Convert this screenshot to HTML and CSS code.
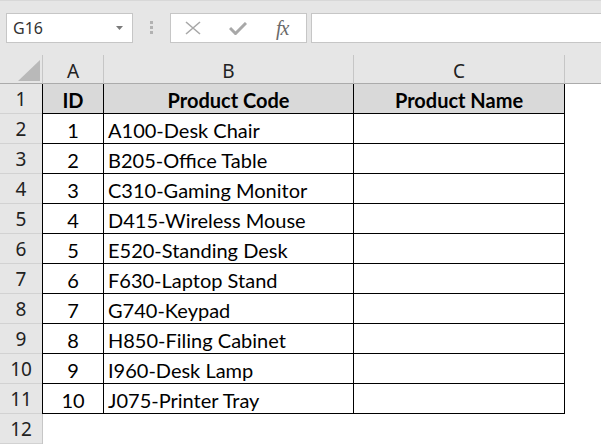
FILE: index.html
```html
<!DOCTYPE html>
<html lang="en">
<head>
  <meta charset="UTF-8" />
  <meta name="viewport" content="width=device-width, initial-scale=1" />
  <title>Product Codes</title>
  <link rel="stylesheet" href="styles.css">
</head>
<body>
  <div class="formula-bar">
    <div class="name-box">
      <span>G16</span>
      <svg class="caret" width="7" height="4" viewBox="0 0 7 4"><polygon points="0,0 7,0 3.5,4" /></svg>
    </div>
    <div class="grip"><i></i><i></i><i></i></div>
    <div class="fx-buttons">
      <svg class="icon-cancel" width="16" height="14" viewBox="0 0 16 14">
        <path d="M1 1 L15 13 M15 1 L1 13" />
      </svg>
      <svg class="icon-enter" width="18" height="13" viewBox="0 0 18 13">
        <path d="M1 6 L6.5 11.5 L17 1" />
      </svg>
      <span class="fx">fx</span>
    </div>
    <div class="formula-input"></div>
  </div>

  <div class="sheet">
    <div class="corner">
      <svg width="22" height="21" viewBox="0 0 22 21"><polygon points="22,0 22,21 0,21" /></svg>
    </div>
    <div class="col-head first">A</div>
    <div class="col-head">B</div>
    <div class="col-head">C</div>
    <div class="col-head last"></div>

    <div class="row-head">1</div>
    <div class="cell first hdr">ID</div>
    <div class="cell hdr">Product Code</div>
    <div class="cell hdr">Product Name</div>
    <div class="blank"></div>

    <div class="row-head">2</div>
    <div class="cell first num">1</div>
    <div class="cell text">A100-Desk Chair</div>
    <div class="cell"></div>
    <div class="blank"></div>

    <div class="row-head">3</div>
    <div class="cell first num">2</div>
    <div class="cell text">B205-Office Table</div>
    <div class="cell"></div>
    <div class="blank"></div>

    <div class="row-head">4</div>
    <div class="cell first num">3</div>
    <div class="cell text">C310-Gaming Monitor</div>
    <div class="cell"></div>
    <div class="blank"></div>

    <div class="row-head">5</div>
    <div class="cell first num">4</div>
    <div class="cell text">D415-Wireless Mouse</div>
    <div class="cell"></div>
    <div class="blank"></div>

    <div class="row-head">6</div>
    <div class="cell first num">5</div>
    <div class="cell text">E520-Standing Desk</div>
    <div class="cell"></div>
    <div class="blank"></div>

    <div class="row-head">7</div>
    <div class="cell first num">6</div>
    <div class="cell text">F630-Laptop Stand</div>
    <div class="cell"></div>
    <div class="blank"></div>

    <div class="row-head">8</div>
    <div class="cell first num">7</div>
    <div class="cell text">G740-Keypad</div>
    <div class="cell"></div>
    <div class="blank"></div>

    <div class="row-head">9</div>
    <div class="cell first num">8</div>
    <div class="cell text">H850-Filing Cabinet</div>
    <div class="cell"></div>
    <div class="blank"></div>

    <div class="row-head">10</div>
    <div class="cell first num">9</div>
    <div class="cell text">I960-Desk Lamp</div>
    <div class="cell"></div>
    <div class="blank"></div>

    <div class="row-head">11</div>
    <div class="cell first num">10</div>
    <div class="cell text">J075-Printer Tray</div>
    <div class="cell"></div>
    <div class="blank"></div>

    <div class="row-head">12</div>
    <div class="blank first"></div>
    <div class="blank"></div>
    <div class="blank"></div>
    <div class="blank"></div>
  </div>
</body>
</html>
```

FILE: styles.css
```css
* {
  box-sizing: border-box;
}

body {
  margin: 0;
  background: #fff;
  font-family: 'Noto Sans', sans-serif;
  color: #222;
  overflow: hidden;
}

/* top bar: name box + formula */
.formula-bar {
  display: flex;
  align-items: flex-start;
  height: 55px;
  padding: 13px 0 0 6px;
  background: #e6e6e6;
  border-top: 1px solid #d8d8d8;
}

.name-box {
  width: 127px;
  height: 30px;
  margin-top: -1px;
  background: #fff;
  border: 1px solid #c6c6c6;
  display: flex;
  align-items: center;
  justify-content: space-between;
  padding: 0 9px 0 6px;
  font-size: 16px;
  color: #333;
}

.caret polygon {
  fill: #7a7a7a;
}

.grip {
  display: flex;
  flex-direction: column;
  gap: 2px;
  margin: 7px 0 0 17px;
}

.grip i {
  display: block;
  width: 3px;
  height: 3px;
  background: #b2b2b2;
}

.fx-buttons {
  width: 137px;
  height: 30px;
  margin: -1px 0 0 17px;
  background: #fff;
  border: 1px solid #c6c6c6;
  display: flex;
  align-items: center;
  padding-left: 14px;
}

.icon-cancel path {
  stroke: #a8a8a8;
  stroke-width: 1.6;
  fill: none;
}

.icon-enter {
  margin-left: 28px;
}

.icon-enter path {
  stroke: #a8a8a8;
  stroke-width: 3;
  fill: none;
}

.fx {
  margin-left: 29px;
  font-family: 'Liberation Serif', serif;
  font-style: italic;
  font-size: 20px;
  color: #6a6a6a;
  letter-spacing: -1px;
}

.formula-input {
  flex: 1;
  height: 30px;
  margin: -1px 0 0 4px;
  background: #fff;
  border: 1px solid #c6c6c6;
  border-right: none;
}

/* grid */
.sheet {
  display: grid;
  grid-template-columns: 42px 62px 250px 211px 1fr;
  grid-template-rows: 29px repeat(12, 30px);
}

.corner {
  background: #e6e6e6;
  border-bottom: 1px solid #ababab;
  display: flex;
  align-items: flex-end;
  justify-content: flex-end;
  padding: 0 2px 2px 0;
}

.corner polygon {
  fill: #b9b9b9;
}

.col-head {
  background: #e6e6e6;
  border-right: 1px solid #c6c6c6;
  border-bottom: 1px solid #ababab;
  display: flex;
  align-items: center;
  justify-content: center;
  padding-top: 3px;
  font-size: 19px;
}

.col-head.first {
  border-left: 1px solid #c6c6c6;
}

.col-head.last {
  border-right: none;
}

.row-head {
  background: #e6e6e6;
  border-bottom: 1px solid #d2d2d2;
  display: flex;
  align-items: center;
  justify-content: center;
  font-size: 19px;
}

.cell {
  font-family: Lato, 'Liberation Sans', sans-serif;
  font-size: 20px;
  color: #000;
  border-right: 1px solid #000;
  border-bottom: 1px solid #000;
  display: flex;
  align-items: flex-end;
  padding-bottom: 1px;
  white-space: nowrap;
}

.cell.first {
  border-left: 1px solid #000;
}

.cell.hdr {
  background: #d9d9d9;
  font-weight: bold;
  justify-content: center;
}

.cell.num {
  justify-content: center;
}

.cell.text {
  padding-left: 4px;
}

.blank {
  background: #fff;
}

.blank.first {
  border-left: 1px solid #c6c6c6;
}
```
